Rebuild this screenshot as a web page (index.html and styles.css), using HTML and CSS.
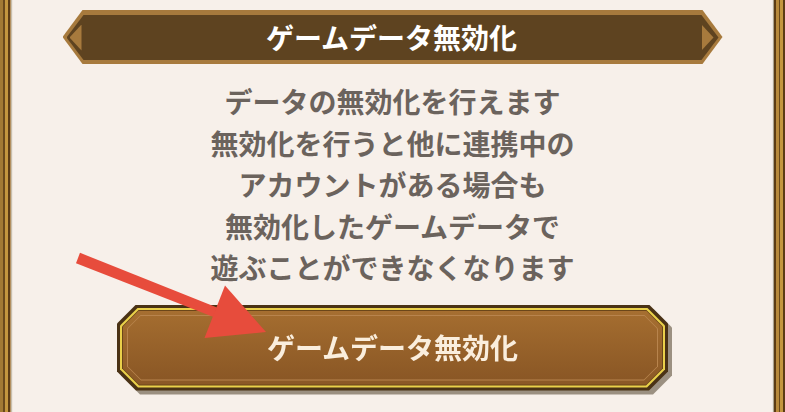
FILE: index.html
```html
<!DOCTYPE html>
<html lang="ja">
<head>
<meta charset="utf-8">
<title>ゲームデータ無効化</title>
<link rel="stylesheet" href="styles.css">
</head>
<body>
<div class="page">
    <div class="rail rail-left"></div>
    <main class="panel">
        <div class="banner">
            <div class="banner-inner">
                <span class="tip tip-left"></span>
                <h1>ゲームデータ無効化</h1>
                <span class="tip tip-right"></span>
            </div>
        </div>
        <p class="notice">
            データの無効化を行えます<br>
            無効化を行うと他に連携中の<br>
            アカウントがある場合も<br>
            無効化したゲームデータで<br>
            遊ぶことができなくなります
        </p>
        <div class="btn-wrap">
            <a class="btn" href="#">
                <span class="btn-gold">
                    <span class="btn-rim">
                        <span class="btn-face">
                            <span class="btn-bevel">
                                <span class="btn-label">ゲームデータ無効化</span>
                            </span>
                        </span>
                    </span>
                </span>
            </a>
        </div>
    </main>
    <div class="rail rail-right"></div>

    <!-- red pointer drawn over the panel -->
    <svg class="pointer" width="785" height="412" viewBox="0 0 785 412">
        <polygon fill="#e74c3c" points="80,252.8 76,263.2 213.5,317 217,307.5"/>
        <polygon fill="#e74c3c" points="225,285.5 266,332 204.5,338"/>
    </svg>
</div>
</body>
</html>
```

FILE: styles.css
```css
html, body {
    margin: 0;
    padding: 0;
}
body {
    font-family: "Noto Sans CJK JP", "Noto Sans", sans-serif;
    background: #f7f0ea;
}
.page {
    position: relative;
    display: flex;
    width: 785px;
    height: 412px;
    overflow: hidden;
}

/* wooden frame on both sides */
.rail {
    flex: none;
    width: 13px;
}
.rail-left {
    background: linear-gradient(to right,
        #a27a34 0, #a27a34 3px,
        #6a4a1c 3px, #6a4a1c 5px,
        #c4973f 5px, #c4973f 8px,
        #5c3c14 8px, #5c3c14 10px,
        #b39060 10px, #b39060 11px,
        #c8bfae 11px, #c8bfae 12px,
        #efe7de 12px);
}
.rail-right {
    background: linear-gradient(to right,
        #efe7de 0, #efe7de 1px,
        #aaa290 1px, #aaa290 2px,
        #5c3c14 2px, #5c3c14 4px,
        #b88a3c 4px, #b88a3c 7px,
        #6a4a1c 7px, #6a4a1c 8px,
        #c4973f 8px, #c4973f 11px,
        #5c3c14 11px);
}

.panel {
    flex: 1;
    display: flex;
    flex-direction: column;
    align-items: center;
    padding-top: 10px;
}

/* title plate */
.banner {
    width: 660px;
    height: 54px;
    box-sizing: border-box;
    padding: 5px 4px 4px;
    background: #a77a3d;
    clip-path: polygon(20px 0, calc(100% - 20px) 0, 100% 50%, calc(100% - 20px) 100%, 20px 100%, 0 50%);
}
.banner-inner {
    display: flex;
    align-items: center;
    height: 100%;
    padding: 0 5px 0 3px;
    background: #5e4320;
    clip-path: polygon(17px 0, calc(100% - 17px) 0, 100% 50%, calc(100% - 17px) 100%, 17px 100%, 0 50%);
}
.banner h1 {
    flex: 1;
    margin: 0;
    text-align: center;
    color: #fff;
    font-size: 28px;
    font-weight: bold;
    line-height: 45px;
}
.tip {
    flex: none;
    width: 12px;
    height: 26px;
    background: #a77a3d;
}
.tip-left {
    clip-path: polygon(0 50%, 100% 0, 100% 100%);
}
.tip-right {
    clip-path: polygon(100% 50%, 0 0, 0 100%);
}

.notice {
    margin: 17px 0 0;
    text-align: center;
    color: #6b635d;
    font-size: 28px;
    font-weight: bold;
    line-height: 41.5px;
}

/* action button */
.btn-wrap {
    margin-top: 16px;
    filter: drop-shadow(4px 4px 0 #9b9081);
}
.btn {
    --cut: 19px;
    display: block;
    width: 551px;
    height: 86px;
    box-sizing: border-box;
    padding: 3px;
    background: #4a3215;
    text-decoration: none;
}
.btn, .btn span {
    clip-path: polygon(var(--cut) 0, calc(100% - var(--cut)) 0, 100% var(--cut), 100% calc(100% - var(--cut)), calc(100% - var(--cut)) 100%, var(--cut) 100%, 0 calc(100% - var(--cut)), 0 var(--cut));
}
.btn span {
    display: block;
    height: 100%;
    box-sizing: border-box;
}
.btn-gold {
    --cut: 18px;
    padding: 2px;
    background: #ead04a;
}
.btn-rim {
    --cut: 17px;
    padding: 1px;
    background: #6b4619;
}
.btn-face {
    --cut: 16px;
    padding: 4px;
    background: linear-gradient(#a66f31, #8b5826);
}
.btn-bevel {
    --cut: 14px;
    padding: 1px;
    background: #b8844d;
}
.btn .btn-label {
    --cut: 13px;
    display: flex;
    align-items: center;
    justify-content: center;
    background: linear-gradient(#a36c2f, #8a5725);
    color: #faeedd;
    font-size: 28px;
    font-weight: bold;
    padding-bottom: 1px;
}

.pointer {
    position: absolute;
    left: 0;
    top: 0;
    pointer-events: none;
}
```
